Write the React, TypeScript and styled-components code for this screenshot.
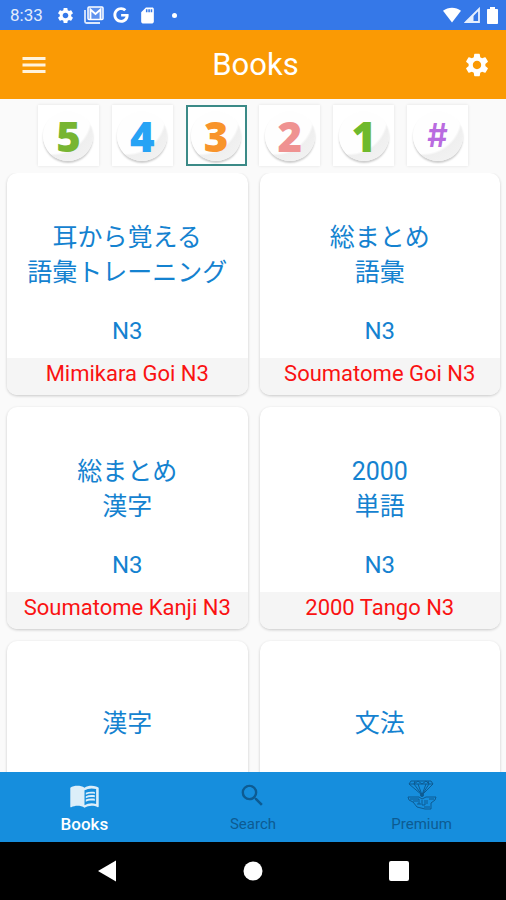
import React, { useState } from "react";
import styled, { createGlobalStyle } from "styled-components";
import { MdMenuBook, MdSdCard, MdSearch, MdSettings } from "react-icons/md";
import { FaGoogle } from "react-icons/fa";

const GlobalStyle = createGlobalStyle`
  *, *::before, *::after { box-sizing: border-box; }
  body {
    margin: 0;
    background: #fafafa;
    font-family: Roboto, "Noto Sans CJK JP", sans-serif;
  }
  button { font: inherit; border: 0; padding: 0; margin: 0; cursor: pointer; }
  svg { display: block; }
`;

const Screen = styled.div`
  display: flex;
  flex-direction: column;
  height: 100vh;
  background: #fafafa;
`;

const StatusBar = styled.div`
  display: flex;
  align-items: center;
  justify-content: space-between;
  flex: none;
  height: 30px;
  padding: 0 8px 0 10px;
  background: #3578e8;
  color: #fff;
`;

const StatusGroup = styled.div<{ $gap: number }>`
  display: flex;
  align-items: center;
  gap: ${({ $gap }) => $gap}px;
`;

const Clock = styled.span`
  font-size: 17px;
  line-height: 30px;
  color: #e3ecfb;
  margin-right: 4px;
`;

const Dot = styled.span`
  width: 5px;
  height: 5px;
  margin-left: 6px;
  border-radius: 50%;
  background: #fff;
`;

const AppBar = styled.header`
  display: grid;
  grid-template-columns: 48px 1fr 48px;
  align-items: center;
  flex: none;
  height: 69px;
  padding: 0 5px 0 10px;
  background: #fa9a04;
  color: #fff;
`;

const IconButton = styled.button`
  display: grid;
  place-items: center;
  height: 48px;
  background: transparent;
  color: #fff;
`;

const Title = styled.h1`
  margin: 0;
  font-size: 31px;
  line-height: 40px;
  font-weight: 400;
  text-align: center;
`;

const LevelTabs = styled.nav`
  display: flex;
  justify-content: space-between;
  align-self: center;
  flex: none;
  width: 85%;
  padding: 6px 0 7px;
`;

const LevelTab = styled.button<{ $color: string; $selected: boolean }>`
  display: grid;
  place-items: center;
  width: 61px;
  height: 61px;
  background: #fff;
  border: 2px solid ${({ $selected }) => ($selected ? "#3b8a87" : "#fff")};
  box-shadow: ${({ $selected }) => ($selected ? "none" : "0 0 3px rgba(0, 0, 0, 0.1)")};
  color: ${({ $color }) => $color};
`;

const Disc = styled.span<{ $small?: boolean }>`
  display: grid;
  place-items: center;
  width: 50px;
  height: 50px;
  border-radius: 50%;
  background: radial-gradient(circle at 20% 10%, #fefefe 0 62%, #efefef 66%, #f4f4f4 100%);
  box-shadow: 0 2px 2px rgba(0, 0, 0, 0.2);
  font-family: ${({ $small }) => ($small ? "Inter" : '"Open Sans"')}, sans-serif;
  font-size: ${({ $small }) => ($small ? 32 : 42)}px;
  font-weight: ${({ $small }) => ($small ? 600 : 800)};
  line-height: 50px;
`;

const Scroller = styled.main`
  flex: 1;
  min-height: 0;
  overflow: hidden;
`;

const BookGrid = styled.div`
  display: grid;
  grid-template-columns: 1fr 1fr;
  gap: 12px;
  padding: 0 6px 12px 7px;
`;

const Card = styled.button`
  display: flex;
  flex-direction: column;
  min-width: 0;
  overflow: hidden;
  border-radius: 10px;
  background: #fff;
  box-shadow: 0 1px 3px rgba(0, 0, 0, 0.2);
`;

const Cover = styled.span`
  display: flex;
  flex-direction: column;
  align-self: stretch;
  min-height: 185px;
  padding: 23px 0 9px;
  color: #1482d0;
  font-size: 25px;
  line-height: 35px;
`;

const CoverTitle = styled.span`
  display: flex;
  flex-direction: column;
  justify-content: center;
  flex: 1;
`;

const CoverLevel = styled.span`
  min-height: 35px;
  font-size: 24px;
`;

const Caption = styled.span`
  align-self: stretch;
  height: 37px;
  background: #f5f5f5;
  color: #fa1212;
  font-size: 22px;
  line-height: 32px;
`;

const BottomNav = styled.nav`
  display: grid;
  grid-template-columns: repeat(3, 1fr);
  flex: none;
  height: 70px;
  background: #168edd;
`;

const NavButton = styled.button<{ $active: boolean }>`
  display: flex;
  flex-direction: column;
  align-items: center;
  gap: 2px;
  padding-top: 8px;
  background: transparent;
  color: ${({ $active }) => ($active ? "#fff" : "#0d5b92")};
  font-size: ${({ $active }) => ($active ? 17 : 15)}px;
  font-weight: ${({ $active }) => ($active ? 500 : 400)};
  line-height: 24px;
`;

const NavIcon = styled.span<{ $faded?: boolean }>`
  display: grid;
  place-items: center;
  height: 30px;
  opacity: ${({ $faded }) => ($faded ? 0.85 : 1)};
`;

const SystemBar = styled.nav`
  display: flex;
  justify-content: center;
  align-items: center;
  flex: none;
  gap: 98px;
  height: 58px;
  background: #000;
`;

const SystemButton = styled.button`
  display: grid;
  place-items: center;
  width: 48px;
  height: 48px;
  background: transparent;
`;

const MenuIcon = () => (
  <svg width="24" height="18" viewBox="0 0 24 18" aria-hidden="true">
    <path d="M.500 2.500h23M.500 9h23M.500 15.500h23" stroke="#fff3dd" strokeWidth="3" />
  </svg>
);

const MailIcon = () => (
  <svg width="20" height="18" viewBox="0 0 20 18" aria-hidden="true">
    <path d="M1 4v11.500c0 .8.7 1.500 1.500 1.500H16" fill="none" stroke="#dce8fc" strokeWidth="1.800" />
    <rect x="4" y="1" width="15" height="12.500" rx="1" fill="#5f92ee" stroke="#fff" strokeWidth="1.500" />
    <path d="M6.500 13V3.500l5 4.500 5-4.500V13" fill="none" stroke="#fff" strokeWidth="1.800" />
  </svg>
);

const WifiIcon = () => (
  <svg width="18" height="16" viewBox="0 0 19 16" aria-hidden="true">
    <path d="M0 3.500C5.500-.8 13.500-.8 19 3.500L9.500 16Z" fill="#fff" />
  </svg>
);

const SignalIcon = () => (
  <svg width="16" height="16" viewBox="0 0 16 16" aria-hidden="true">
    <path d="M2 15 15 2v13Z" fill="none" stroke="#e6effd" strokeWidth="1.800" />
    <path d="M1 15.500 9.500 7v8.500Z" fill="#e6effd" />
  </svg>
);

const BatteryIcon = () => (
  <svg width="11" height="17" viewBox="0 0 11 17" aria-hidden="true">
    <path d="M3 0h5v2h2.200c.5 0 .8.300.8.800v13.400c0 .5-.3.800-.8.800H.8c-.5 0-.8-.3-.8-.8V2.800C0 2.300.3 2 .8 2H3Z" fill="#fff" />
  </svg>
);

const DiamondHandIcon = () => (
  <svg
    width="30"
    height="30"
    viewBox="0 0 30 30"
    fill="none"
    stroke="currentColor"
    strokeWidth="1"
    strokeLinejoin="round"
    aria-hidden="true"
  >
    <path d="M4 1h20l2 3-11 11L2 4Z" />
    <path d="M2 4h24M8 1 7 4l8 11 7-11-1-3M7 4l4-3 4 3 4-3 3 3M11 4l4 11 4-11" />
    <circle cx="15" cy="15" r="1.500" fill="currentColor" />
    <path d="M1 17h11l3 2 4-2h10l-1 3-4 3v6h-6l-8-2-4-5-4-2Z" />
    <path d="M3 19h9M6 21h5M12 19v5M15 20v5h3v-5M20 20v4M22 19h5M10 24h4M17 27h6" />
  </svg>
);

const levels = [
  { label: "5", color: "#77b532" },
  { label: "4", color: "#27a3f5" },
  { label: "3", color: "#f8942b" },
  { label: "2", color: "#ef9291" },
  { label: "1", color: "#6fb92c" },
  { label: "#", color: "#b96be0" },
];

type Book = { title: string[]; level?: string; caption?: string };

const books: Book[] = [
  { title: ["耳から覚える", "語彙トレーニング"], level: "N3", caption: "Mimikara Goi N3" },
  { title: ["総まとめ", "語彙"], level: "N3", caption: "Soumatome Goi N3" },
  { title: ["総まとめ", "漢字"], level: "N3", caption: "Soumatome Kanji N3" },
  { title: ["2000", "単語"], level: "N3", caption: "2000 Tango N3" },
  { title: ["漢字"] },
  { title: ["文法"] },
];

const sections = [
  { name: "Books", icon: <MdMenuBook size={31} /> },
  { name: "Search", icon: <MdSearch size={29} /> },
  { name: "Premium", icon: <DiamondHandIcon /> },
];

export default function App() {
  const [level, setLevel] = useState("3");
  const [section, setSection] = useState("Books");

  return (
    <>
      <GlobalStyle />
      <Screen lang="ja">
        <StatusBar>
          <StatusGroup $gap={9}>
            <Clock>8:33</Clock>
            <MdSettings size={19} />
            <MailIcon />
            <FaGoogle size={16} />
            <MdSdCard size={19} />
            <Dot />
          </StatusGroup>
          <StatusGroup $gap={7}>
            <StatusGroup $gap={3}>
              <WifiIcon />
              <SignalIcon />
            </StatusGroup>
            <BatteryIcon />
          </StatusGroup>
        </StatusBar>
        <AppBar>
          <IconButton aria-label="Menu">
            <MenuIcon />
          </IconButton>
          <Title>Books</Title>
          <IconButton aria-label="Settings">
            <MdSettings size={28} />
          </IconButton>
        </AppBar>
        <LevelTabs aria-label="Level">
          {levels.map(({ label, color }) => (
            <LevelTab
              key={label}
              $color={color}
              $selected={label === level}
              aria-pressed={label === level}
              onClick={() => setLevel(label)}
            >
              <Disc $small={label === "#"}>{label}</Disc>
            </LevelTab>
          ))}
        </LevelTabs>
        <Scroller>
          <BookGrid>
            {books.map((book) => (
              <Card key={book.title.join("")}>
                <Cover>
                  <CoverTitle>
                    {book.title.map((line) => (
                      <span key={line}>{line}</span>
                    ))}
                  </CoverTitle>
                  <CoverLevel>{book.level}</CoverLevel>
                </Cover>
                <Caption>{book.caption}</Caption>
              </Card>
            ))}
          </BookGrid>
        </Scroller>
        <BottomNav aria-label="Sections">
          {sections.map(({ name, icon }) => (
            <NavButton key={name} $active={name === section} onClick={() => setSection(name)}>
              <NavIcon $faded={name === section}>{icon}</NavIcon>
              {name}
            </NavButton>
          ))}
        </BottomNav>
        <SystemBar aria-label="System">
          <SystemButton aria-label="Back">
            <svg width="18" height="22" viewBox="0 0 18 22">
              <path d="M18 .500v21L0 11Z" fill="#fff" />
            </svg>
          </SystemButton>
          <SystemButton aria-label="Home">
            <svg width="20" height="20" viewBox="0 0 20 20">
              <circle cx="10" cy="10" r="9.500" fill="#fff" />
            </svg>
          </SystemButton>
          <SystemButton aria-label="Recent apps">
            <svg width="20" height="20" viewBox="0 0 20 20">
              <rect width="20" height="20" rx="2" fill="#fff" />
            </svg>
          </SystemButton>
        </SystemBar>
      </Screen>
    </>
  );
}
